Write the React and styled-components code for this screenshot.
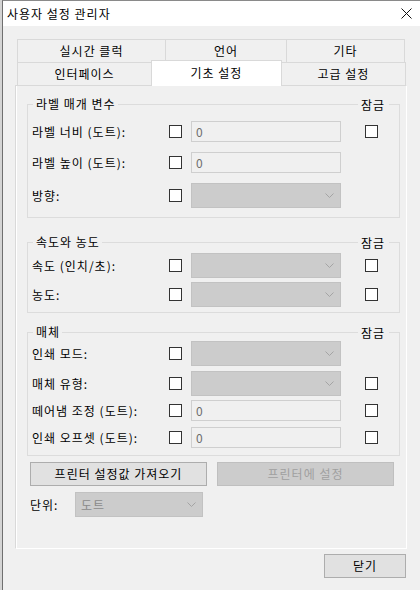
import React from 'react';
import styled, { createGlobalStyle } from 'styled-components';

const GlobalStyle = createGlobalStyle`
  html, body {
    margin: 0;
    padding: 0;
    background: #d4d4d4;
  }
  body {
    font-family: "Noto Sans CJK KR", "Noto Sans", "Liberation Sans", sans-serif;
    font-size: 12px;
    letter-spacing: 1px;
    color: #000;
  }
`;

// 대화상자 창 전체
const Window = styled.div`
  width: 418px;
  height: 590px;
  margin-left: 2px;
  box-sizing: border-box;
  border-left: 1px solid #6f6f6f;
  border-top: 1px solid #8a8a8a;
  background: #f0f0f0;
  display: flex;
  flex-direction: column;
`;

const TitleBar = styled.div`
  height: 25px;
  flex: none;
  background: #fff;
  display: flex;
  align-items: center;
  justify-content: space-between;
  padding: 0 8px 0 4px;
  line-height: 16px;
`;

const CloseX = () => (
  <svg width="11" height="11" viewBox="0 0 11 11">
    <path d="M0.5 0.5 L10.5 10.5 M10.5 0.5 L0.5 10.5" stroke="#111" strokeWidth="1" fill="none" />
  </svg>
);

const Body = styled.div`
  flex: 1;
  padding: 13px 13px 0 12px;
  display: flex;
  flex-direction: column;
`;

const TabRow = styled.div`
  display: flex;
  padding-left: 2px;
  margin-top: ${(p) => p.$mt || 0}px;
`;

const Tab = styled.div`
  width: ${(p) => p.$w}px;
  height: 24px;
  box-sizing: border-box;
  border: 1px solid #d9d9d9;
  background: #f0f0f0;
  display: flex;
  align-items: center;
  justify-content: center;
  line-height: 16px;
  & + & {
    margin-left: -1px;
  }
  ${(p) =>
    p.$active &&
    `
    position: relative;
    z-index: 1;
    background: #fff;
    height: 26px;
    margin-top: -2px;
    border-bottom: none;
    padding-bottom: 1px;
  `}
`;

const Panel = styled.div`
  height: 464px;
  margin-top: -1px;
  box-sizing: border-box;
  border: 1px solid #d9d9d9;
  border-right-color: #fff;
  border-bottom-color: #fff;
  box-shadow: inset 1px 0 0 #fff;
  padding: 10px 6px 0 11px;
  display: flex;
  flex-direction: column;
`;

const Group = styled.fieldset`
  margin: ${(p) => p.$mt || 0}px 0 0 0;
  padding: 0 0 ${(p) => p.$pb}px 0;
  border: 1px solid #dcdcdc;
  min-width: 0;
`;

const Legend = styled.legend`
  margin-left: 5px;
  padding: 0;
  width: 356px;
  height: 16px;
  line-height: 16px;
  display: flex;
  align-items: center;
`;

const LegendTitle = styled.span`
  padding: 0 2px 0 3px;
`;

const LegendLine = styled.span`
  flex: 1;
  height: 1px;
  background: #dcdcdc;
`;

const LockLabel = styled.span`
  padding: 2px 4px 0 3px;
`;

const Row = styled.div`
  display: grid;
  grid-template-columns: 137px 22px 174px 13px;
  align-items: center;
  margin: ${(p) => p.$mt || 0}px 0 0 4px;
  line-height: 16px;
  white-space: nowrap;
`;

const Check = styled.span`
  display: block;
  width: 13px;
  height: 13px;
  box-sizing: border-box;
  border: 1px solid #333;
  background: #fff;
`;

const TextBox = styled.div`
  width: 150px;
  height: 21px;
  box-sizing: border-box;
  border: 1px solid #cfcfcf;
  background: #f0f0f0;
  color: #6d6d6d;
  padding-left: 4px;
  display: flex;
  align-items: center;
`;

const ComboBox = styled.div`
  width: ${(p) => p.$w || 150}px;
  height: 25px;
  box-sizing: border-box;
  border: 1px solid #c2c2c2;
  background: #cccccc;
  color: #8a8a8a;
  display: flex;
  align-items: center;
  justify-content: space-between;
  padding: 0 6px 0 5px;
`;

const Chevron = () => (
  <svg width="9" height="5" viewBox="0 0 9 5">
    <polyline points="0.5,0.5 4.5,4.5 8.5,0.5" stroke="#a4a4a4" strokeWidth="1" fill="none" />
  </svg>
);

const Combo = ({ w, text }) => (
  <ComboBox $w={w}>
    <span>{text}</span>
    <Chevron />
  </ComboBox>
);

const ButtonRow = styled.div`
  display: flex;
  gap: 10px;
  margin: 6px 0 0 3px;
`;

const Button = styled.div`
  width: ${(p) => p.$w || 177}px;
  height: 24px;
  box-sizing: border-box;
  border: 1px solid ${(p) => (p.$disabled ? '#bfbfbf' : '#adadad')};
  background: ${(p) => (p.$disabled ? '#cccccc' : '#e1e1e1')};
  color: ${(p) => (p.$disabled ? '#a0a0a0' : '#000')};
  display: flex;
  align-items: center;
  justify-content: center;
  line-height: 16px;
`;

const UnitRow = styled.div`
  display: flex;
  align-items: center;
  margin: 6px 0 0 3px;
`;

const UnitLabel = styled.span`
  width: 45px;
`;

const Footer = styled.div`
  display: flex;
  justify-content: flex-end;
  padding: 5px 1px 0 0;
`;

const SettingRow = ({ label, control, lock, mt }) => (
  <Row $mt={mt}>
    <span>{label}</span>
    <Check />
    {control}
    {lock ? <Check /> : <span />}
  </Row>
);

const GroupHead = ({ title }) => (
  <Legend>
    <LegendTitle>{title}</LegendTitle>
    <LegendLine />
    <LockLabel>잠금</LockLabel>
  </Legend>
);

export default function App() {
  return (
    <>
      <GlobalStyle />
      <Window>
        <TitleBar>
          <span>사용자 설정 관리자</span>
          <CloseX />
        </TitleBar>
        <Body>
          <TabRow>
            <Tab $w={149}>실시간 클럭</Tab>
            <Tab $w={122}>언어</Tab>
            <Tab $w={119}>기타</Tab>
          </TabRow>
          <TabRow $mt={-1}>
            <Tab $w={135}>인터페이스</Tab>
            <Tab $w={131} $active>기초 설정</Tab>
            <Tab $w={125}>고급 설정</Tab>
          </TabRow>
          <Panel>
            <Group $pb={9}>
              <GroupHead title="라벨 매개 변수" />
              <SettingRow mt={9} label="라벨 너비 (도트):" control={<TextBox>0</TextBox>} lock />
              <SettingRow mt={10} label="라벨 높이 (도트):" control={<TextBox>0</TextBox>} />
              <SettingRow mt={10} label="방향:" control={<Combo />} />
            </Group>

            <Group $mt={16} $pb={5}>
              <GroupHead title="속도와 농도" />
              <SettingRow mt={3} label="속도 (인치/초):" control={<Combo />} lock />
              <SettingRow mt={4} label="농도:" control={<Combo />} lock />
            </Group>

            <Group $mt={11} $pb={7}>
              <GroupHead title="매체" />
              <SettingRow mt={1} label="인쇄 모드:" control={<Combo />} />
              <SettingRow mt={5} label="매체 유형:" control={<Combo />} lock />
              <SettingRow mt={4} label="떼어냄 조정 (도트):" control={<TextBox>0</TextBox>} lock />
              <SettingRow mt={6} label="인쇄 오프셋 (도트):" control={<TextBox>0</TextBox>} lock />
            </Group>

            <ButtonRow>
              <Button>프린터 설정값 가져오기</Button>
              <Button $disabled>프린터에 설정</Button>
            </ButtonRow>
            <UnitRow>
              <UnitLabel>단위:</UnitLabel>
              <Combo w={128} text="도트" />
            </UnitRow>
          </Panel>
          <Footer>
            <Button $w={82}>닫기</Button>
          </Footer>
        </Body>
      </Window>
    </>
  );
}
